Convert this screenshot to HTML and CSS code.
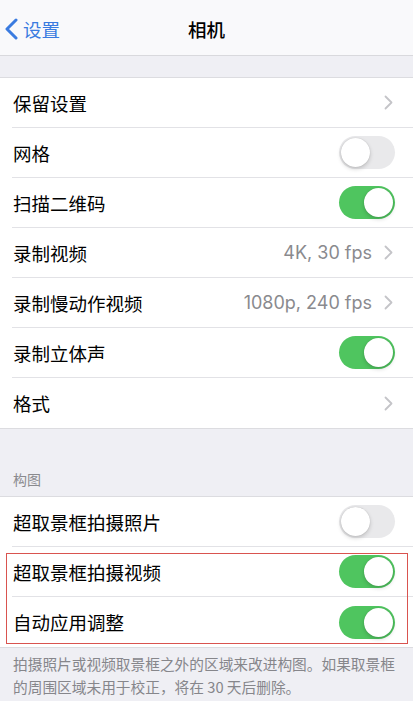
FILE: index.html
```html
<!DOCTYPE html>
<html lang="zh-CN">
<head>
<meta charset="utf-8">
<title>相机</title>
<link rel="stylesheet" href="styles.css">
</head>
<body>
<header class="nav">
  <a class="back">
    <svg class="back-icon" width="15" height="22" viewBox="0 0 15 22"><path d="M12 2 L3 11 L12 20" fill="none" stroke="currentColor" stroke-width="3" stroke-linecap="round" stroke-linejoin="round"/></svg>
    <span>设置</span>
  </a>
  <h1 class="title">相机</h1>
  <span></span>
</header>

<div class="gap"></div>

<section class="group">
  <div class="row"><span class="label">保留设置</span><span class="chev"><svg width="9" height="15" viewBox="0 0 9 15"><path d="M1.5 1.5 L7.5 7.5 L1.5 13.5" fill="none" stroke="currentColor" stroke-width="1.8" stroke-linecap="round" stroke-linejoin="round"/></svg></span></div>
  <div class="row"><span class="label">网格</span><span class="switch"></span></div>
  <div class="row"><span class="label">扫描二维码</span><span class="switch on"></span></div>
  <div class="row"><span class="label">录制视频</span><span class="value">4K, 30 fps</span><span class="chev"><svg width="9" height="15" viewBox="0 0 9 15"><path d="M1.5 1.5 L7.5 7.5 L1.5 13.5" fill="none" stroke="currentColor" stroke-width="1.8" stroke-linecap="round" stroke-linejoin="round"/></svg></span></div>
  <div class="row"><span class="label">录制慢动作视频</span><span class="value">1080p, 240 fps</span><span class="chev"><svg width="9" height="15" viewBox="0 0 9 15"><path d="M1.5 1.5 L7.5 7.5 L1.5 13.5" fill="none" stroke="currentColor" stroke-width="1.8" stroke-linecap="round" stroke-linejoin="round"/></svg></span></div>
  <div class="row"><span class="label">录制立体声</span><span class="switch on"></span></div>
  <div class="row"><span class="label">格式</span><span class="chev"><svg width="9" height="15" viewBox="0 0 9 15"><path d="M1.5 1.5 L7.5 7.5 L1.5 13.5" fill="none" stroke="currentColor" stroke-width="1.8" stroke-linecap="round" stroke-linejoin="round"/></svg></span></div>
</section>

<div class="section-header">构图</div>

<section class="group">
  <div class="row"><span class="label">超取景框拍摄照片</span><span class="switch"></span></div>
  <div class="highlight">
    <div class="row"><span class="label">超取景框拍摄视频</span><span class="switch on"></span></div>
    <div class="row"><span class="label">自动应用调整</span><span class="switch on"></span></div>
  </div>
</section>

<p class="footer">拍摄照片或视频取景框之外的区域来改进构图。如果取景框的周围区域未用于校正，将在 30 天后删除。</p>
</body>
</html>
```
FILE: styles.css
```css
* { box-sizing: border-box; }
body {
  margin: 0;
  background: #efeff4;
  font-family: "Noto Sans CJK SC", "Noto Sans", sans-serif;
  color: #000;
}
.nav {
  height: 56px;
  background: #f9f9fb;
  border-bottom: 1px solid #d9d9dd;
  display: grid;
  grid-template-columns: 1fr auto 1fr;
  align-items: center;
  padding-top: 2px;
}
.back {
  display: flex;
  align-items: center;
  gap: 4px;
  padding-left: 4px;
  color: #3a7be0;
  font-size: 18.5px;
}
.back-icon { display: block; }
.title {
  margin: 0;
  font-size: 18.5px;
  font-weight: 500;
}
.gap { height: 21px; }
.group {
  background: #fff;
  border-top: 1px solid #dcdce0;
  border-bottom: 1px solid #dcdce0;
}
.row {
  height: 50px;
  margin-left: 12px;
  padding-right: 18px;
  display: flex;
  align-items: center;
  border-bottom: 1px solid #e2e2e6;
}
.group > .row:last-child,
.highlight > .row:last-child { border-bottom: none; }
.label {
  flex: 1;
  font-size: 18.5px;
  padding-left: 1px;
}
.value {
  font-family: "Inter", "Liberation Sans", sans-serif;
  font-size: 18px;
  color: #8a8a8e;
  margin-right: 12px;
}
.chev {
  color: #c4c4c8;
  display: flex;
  margin-right: 2px;
}
.switch {
  width: 56px;
  height: 33px;
  border-radius: 17px;
  background: #e9e9eb;
  position: relative;
}
.switch::after {
  content: "";
  position: absolute;
  top: 2px;
  left: 2px;
  width: 29px;
  height: 29px;
  border-radius: 50%;
  background: #fff;
  box-shadow: 0 2px 4px rgba(0,0,0,0.18), 0 0 1px rgba(0,0,0,0.2);
}
.switch.on { background: #4fc55f; }
.switch.on::after { left: 25px; }
.section-header {
  height: 67px;
  display: flex;
  align-items: flex-end;
  padding: 0 13px 7px;
  font-size: 14px;
  color: #8a8a8e;
}
.highlight { position: relative; }
.highlight::after {
  content: "";
  position: absolute;
  left: 6px;
  right: 5px;
  top: 6px;
  bottom: 3px;
  border: 1px solid #d9534f;
  pointer-events: none;
}
.footer {
  margin: 0;
  padding: 4px 13px 0;
  font-size: 14.7px;
  line-height: 23px;
  color: #86868b;
}
```
